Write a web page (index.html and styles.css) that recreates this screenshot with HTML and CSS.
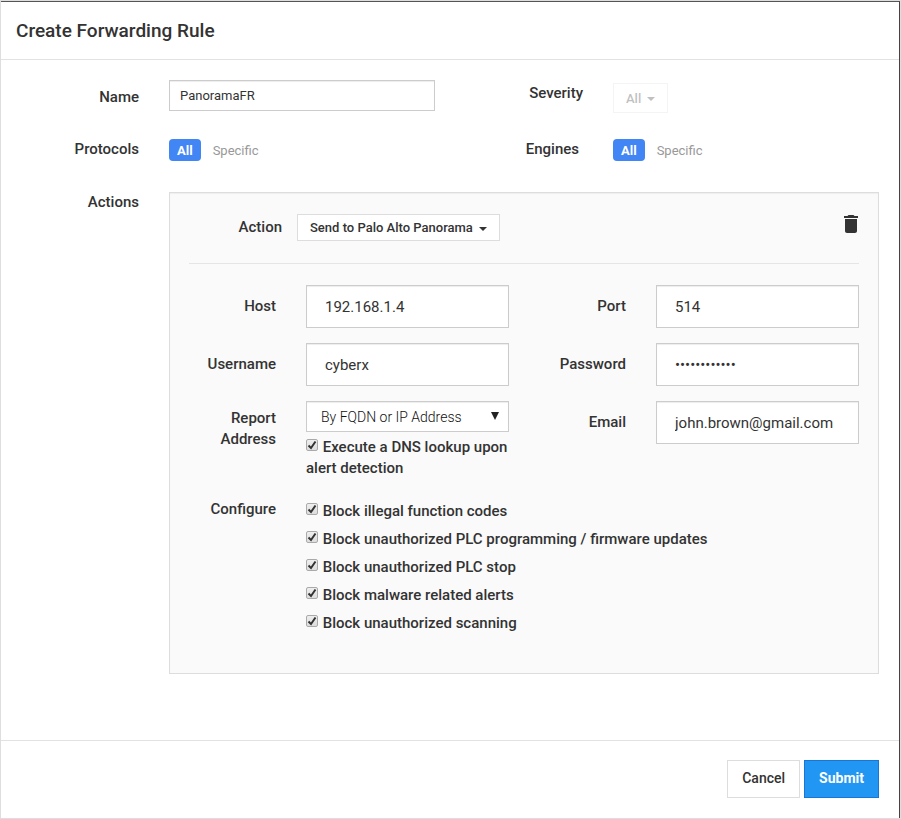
FILE: index.html
```html
<!DOCTYPE html>
<html lang="en">
<head>
<meta charset="utf-8">
<title>Create Forwarding Rule</title>
<link rel="stylesheet" href="styles.css">
</head>
<body>
<form class="dialog">
  <header class="dialog-header">
    <h1 class="dialog-title">Create Forwarding Rule</h1>
  </header>

  <div class="dialog-body">
    <div class="form-row">
      <label class="label name-label" for="name">Name</label>
      <input class="input input-small" id="name" type="text" value="PanoramaFR">
      <label class="label severity-label" for="severity">Severity</label>
      <div class="severity-field">
        <button class="dropdown" id="severity" type="button" disabled>All <span class="caret"></span></button>
      </div>
    </div>

    <div class="form-row scope-row">
      <span class="label" id="protocols">Protocols</span>
      <div class="toggle" role="group" aria-labelledby="protocols">
        <button class="toggle-option active" type="button">All</button>
        <button class="toggle-option" type="button">Specific</button>
      </div>
      <span class="label engines-label" id="engines">Engines</span>
      <div class="toggle" role="group" aria-labelledby="engines">
        <button class="toggle-option active" type="button">All</button>
        <button class="toggle-option" type="button">Specific</button>
      </div>
    </div>

    <div class="form-row actions-row">
      <span class="label">Actions</span>
      <section class="panel">
        <div class="panel-header">
          <label class="label action-label" for="action">Action</label>
          <button class="dropdown" id="action" type="button">Send to Palo Alto Panorama <span class="caret"></span></button>
          <button class="delete" type="button" aria-label="Delete action">
            <svg width="14" height="18" viewBox="0 0 14 18"><path d="M1 16c0 1.100.9 2 2 2h8c1.100 0 2-.9 2-2V4H1zM14 1h-3.500l-1-1h-5l-1 1H0v2h14z"/></svg>
          </button>
        </div>

        <div class="fields">
          <label class="label" for="host">Host</label>
          <input class="input" id="host" type="text" value="192.168.1.4">
          <label class="label" for="port">Port</label>
          <input class="input" id="port" type="text" value="514">

          <label class="label" for="username">Username</label>
          <input class="input" id="username" type="text" value="cyberx">
          <label class="label" for="password">Password</label>
          <input class="input" id="password" type="password" value="panorama1234">

          <label class="label report-label" for="report">Report Address</label>
          <div class="report">
            <div class="select-wrap">
              <select class="select" id="report"><option>By FQDN or IP Address</option></select>
              <svg class="select-arrow" width="8" height="8" viewBox="0 0 8 8"><path d="M0 0h8L4 8z"/></svg>
            </div>
            <label class="check"><input class="checkbox" type="checkbox" checked> Execute a DNS lookup upon alert detection</label>
          </div>
          <label class="label" for="email">Email</label>
          <input class="input" id="email" type="text" value="john.brown@gmail.com">

          <span class="label configure-label" id="configure">Configure</span>
          <div class="configure" role="group" aria-labelledby="configure">
            <label class="check"><input class="checkbox" type="checkbox" checked> Block illegal function codes</label>
            <label class="check"><input class="checkbox" type="checkbox" checked> Block unauthorized PLC programming / firmware updates</label>
            <label class="check"><input class="checkbox" type="checkbox" checked> Block unauthorized PLC stop</label>
            <label class="check"><input class="checkbox" type="checkbox" checked> Block malware related alerts</label>
            <label class="check"><input class="checkbox" type="checkbox" checked> Block unauthorized scanning</label>
          </div>
        </div>
      </section>
    </div>
  </div>

  <footer class="dialog-footer">
    <button class="button" type="button">Cancel</button>
    <button class="button primary" type="submit">Submit</button>
  </footer>
</form>
</body>
</html>
```
FILE: styles.css
```css
* {
  box-sizing: border-box;
}

body {
  margin: 0;
  padding: 1px;
  min-height: 100vh;
  display: flex;
  background: #dedede;
  color: #333;
  font: 500 15px/21px Roboto, sans-serif;
}

button,
input,
select {
  margin: 0;
  color: inherit;
  font-family: inherit;
}

.dialog {
  flex: 1;
  display: flex;
  flex-direction: column;
  background: #fff;
  border-top: 1px solid #555;
  border-right: 1px solid #444;
}

.dialog-header {
  padding: 16px 15px;
  border-bottom: 1px solid #e2e2e2;
}

.dialog-title {
  margin: 0;
  font-size: 19px;
  font-weight: 500;
  line-height: 25px;
}

.dialog-body {
  flex: 1;
  padding: 20px 20px 60px;
}

.form-row {
  display: grid;
  grid-template-columns: 118px 1fr 118px 1fr;
  column-gap: 30px;
  align-items: start;
}

.label {
  text-align: right;
}

.name-label {
  padding-top: 7px;
}

.severity-label {
  padding-top: 3px;
}

.severity-field {
  padding-top: 3px;
}

.severity-field .dropdown {
  height: 30px;
}

.engines-label {
  padding-right: 4px;
}

.scope-row {
  margin-top: 26px;
}

.actions-row {
  margin-top: 31px;
}

.input {
  width: 100%;
  min-width: 0;
  height: 43px;
  padding: 0 18px;
  border: 1px solid #ccc;
  border-radius: 0;
  background: #fff;
  box-shadow: inset 0 1px 1px rgba(0, 0, 0, 0.075);
  font-size: 15px;
  font-weight: 400;
}

.input-small {
  height: 31px;
  padding: 0 10px;
  font-size: 13px;
}

.dropdown {
  height: 27px;
  padding: 0 12px;
  border: 1px solid #ddd;
  background: #fff;
  font-size: 13px;
  font-weight: 500;
}

.dropdown:disabled {
  opacity: 0.3;
}

.caret {
  display: inline-block;
  margin-left: 3px;
  border: 4px solid transparent;
  border-top-color: currentColor;
  border-bottom: 0;
  vertical-align: middle;
}

.toggle {
  display: flex;
  gap: 4px;
}

.toggle-option {
  height: 22px;
  padding: 0 8px;
  border: 0;
  border-radius: 4px;
  background: none;
  color: #999;
  font-size: 13px;
  font-weight: 400;
}

.toggle-option.active {
  background: #4285f4;
  color: #fff;
  font-weight: 700;
}

.panel {
  grid-column: 2 / -1;
  padding: 21px 19px 39px;
  border: 1px solid #ddd;
  background: #fafafa;
  box-shadow: inset 0 1px 1px rgba(0, 0, 0, 0.05);
}

.panel-header {
  display: flex;
  align-items: center;
  gap: 15px;
  padding-bottom: 22px;
  border-bottom: 1px solid #e5e5e5;
}

.action-label {
  width: 93px;
}

.delete {
  display: flex;
  margin-left: auto;
  padding: 0 1px 8px;
  border: 0;
  background: none;
  fill: #333;
}

.fields {
  display: grid;
  grid-template-columns: 87px 1fr 87px 1fr;
  gap: 15px 30px;
  margin-top: 21px;
}

.fields > .label {
  padding-top: 11px;
}

.fields > .report-label {
  padding-top: 7px;
}

.select-wrap {
  position: relative;
}

.select {
  display: block;
  width: 100%;
  height: 31px;
  padding: 0 28px 0 14px;
  appearance: none;
  border: 1px solid #ccc;
  border-radius: 0;
  background: #fff;
  box-shadow: inset 0 1px 1px rgba(0, 0, 0, 0.075);
  color: #111;
  font-size: 14px;
  font-weight: 300;
}

.select-arrow {
  position: absolute;
  top: 11px;
  right: 10px;
  fill: #222;
  pointer-events: none;
}

.check {
  display: block;
}

.report .check {
  margin-top: 5px;
}

.checkbox {
  appearance: none;
  width: 12px;
  height: 12px;
  margin-right: 1px;
  border: 1px solid #aaa;
  border-radius: 2px;
  vertical-align: 1px;
  background: url("data:image/svg+xml,%3Csvg xmlns='http://www.w3.org/2000/svg' viewBox='0 0 10 10'%3E%3Cpath d='M1.500 5.500L4 8l4.500-6.500' fill='none' stroke='%23333' stroke-width='2'/%3E%3C/svg%3E") center / 10px 10px no-repeat, linear-gradient(#eee, #ddd);
}

.fields > .configure-label {
  padding-top: 5px;
}

.configure {
  grid-column: 2 / -1;
  display: grid;
  gap: 7px;
  padding-top: 7px;
}

.dialog-footer {
  display: flex;
  justify-content: flex-end;
  gap: 4px;
  padding: 19px 20px 20px;
  border-top: 1px solid #e2e2e2;
}

.button {
  height: 38px;
  padding: 0 14px 2px;
  border: 1px solid #ddd;
  background: #fff;
  font-size: 14px;
  font-weight: 500;
}

.button.primary {
  border-color: #1976d2;
  background: #2196f3;
  color: #fff;
  font-weight: 700;
}
```
